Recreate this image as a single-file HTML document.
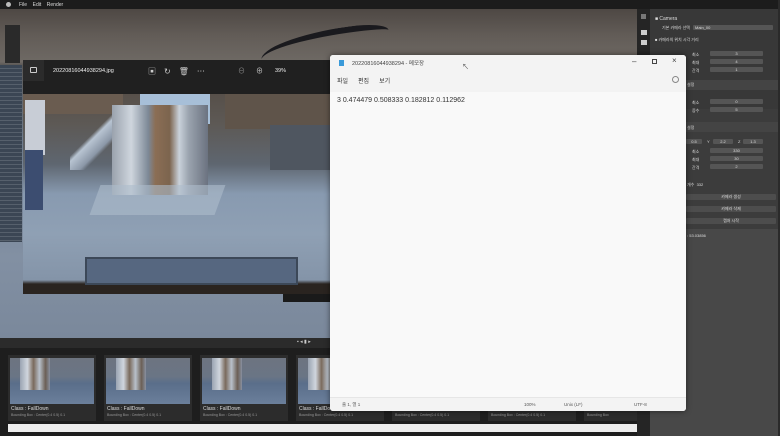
<!DOCTYPE html>
<html><head><meta charset="utf-8"><style>
*{margin:0;padding:0;box-sizing:border-box}
body{width:780px;height:436px;overflow:hidden;background:#202020;font-family:"Liberation Sans","Noto Sans CJK KR",sans-serif;position:relative}
.a{position:absolute}
.t{color:#ddd;font-size:5px;white-space:nowrap}
.card{position:absolute;top:355px;width:88px;height:66px;background:#2c2c2c}
.card .img{position:absolute;left:2px;top:3px;width:84px;height:46px;background:linear-gradient(180deg,#6d7480 0%,#6a7585 40%,#5a6e8a 55%,#6b7f9b 100%)}
.card .img:before{content:"";position:absolute;left:10px;top:0;width:30px;height:32px;background:linear-gradient(90deg,#9aa4b2,#d0d6de 25%,#7a6a5c 45%,#b8c0ca 65%,#6b5f55 85%,#8890a0)}
.card .c1{position:absolute;left:3px;top:51px;font-size:5px;color:#ddd}
.card .c2{position:absolute;left:3px;top:58px;font-size:3.5px;color:#999}
.field{position:absolute;height:5px;background:#555;border-radius:1px;color:#ddd;font-size:4px;text-align:center;line-height:5px}
.btn{position:absolute;height:6px;background:#4d4d4d;color:#ddd;font-size:4px;text-align:center;line-height:6px;border-radius:1px}
</style></head><body>
<div class="a" style="left:0;top:0;width:780px;height:9px;background:#1c1c1c"></div>
<div class="a t" style="left:19px;top:2px">File&nbsp;&nbsp;&nbsp;&nbsp;Edit&nbsp;&nbsp;&nbsp;&nbsp;Render</div>
<div class="a" style="left:6px;top:2px;width:5px;height:5px;border-radius:50%;background:#bbb"></div>
<!-- 3D scene -->
<div class="a" style="left:0;top:9px;width:640px;height:330px;background:linear-gradient(180deg,#4e4844 0%,#625c57 8%,#6e6964 16%,#5a5856 17%,#6e7c8e 40%,#8290a3 75%,#7a889b 100%)"></div>
<div class="a" style="left:260px;top:30px;width:130px;height:30px;border-top:6px solid #1a1a1e;border-radius:70% 30% 0 0;transform:rotate(-8deg)"></div>
<div class="a" style="left:5px;top:25px;width:15px;height:38px;background:#2a2a2a"></div>
<div class="a" style="left:0;top:65px;width:22px;height:177px;background:repeating-linear-gradient(180deg,#3b4654 0 3px,#56606c 3px 4px)"></div>
<div class="a" style="left:283px;top:290px;width:50px;height:12px;background:#1a1a1a"></div>
<!-- photo viewer -->
<div class="a" style="left:23px;top:60px;width:310px;height:34px;background:#202020"></div>
<div class="a" style="left:23px;top:60px;width:21px;height:21px;background:#2b2b2b"></div>
<div class="a" style="left:30px;top:67px;width:7px;height:6px;border:1px solid #ccc;border-radius:1px"></div>
<div class="a t" style="left:53px;top:68px;font-size:5.5px;color:#eee">20220816044938294.jpg</div>
<div class="a t" style="left:148px;top:66px;font-size:8px;color:#ccc;letter-spacing:8px">▣↻🗑⋯</div>
<div class="a t" style="left:238px;top:66px;font-size:7px;color:#888">⊖</div>
<div class="a t" style="left:256px;top:66px;font-size:7px;color:#ccc">⊕</div>
<div class="a t" style="left:275px;top:68px;font-size:5.5px;color:#eee">39%</div>
<div class="a" style="left:23px;top:94px;width:307px;height:200px;background:linear-gradient(180deg,#57504a 0%,#5d5955 15%,#5e6670 35%,#889ab0 50%,#8fa0b4 70%,#8494a8 93%,#2a2420 95%,#2a2420 100%)"></div>
<div class="a" style="left:23px;top:94px;width:100px;height:20px;background:#6a5c50"></div>
<div class="a" style="left:225px;top:94px;width:105px;height:35px;background:#5f544a"></div>
<div class="a" style="left:270px;top:125px;width:60px;height:45px;background:#4f5660"></div>
<div class="a" style="left:140px;top:94px;width:70px;height:30px;background:#a7bfd8"></div>
<div class="a" style="left:70px;top:110px;width:55px;height:60px;background:linear-gradient(135deg,transparent 40%,#b8c4d2 45%,#8c98a8 60%,transparent 65%)"></div>
<div class="a" style="left:112px;top:105px;width:96px;height:90px;background:linear-gradient(90deg,#9aa2ad,#cfd6de 20%,#7c8896 38%,#8b6e55 45%,#7c644e 60%,#c9d1da 70%,#9aa3ae 80%,#6b7280)"></div>
<div class="a" style="left:95px;top:185px;width:125px;height:30px;background:#aebccc;transform:skewX(-20deg);opacity:.6"></div>
<div class="a" style="left:25px;top:100px;width:20px;height:55px;background:#c8cdd6"></div>
<div class="a" style="left:25px;top:150px;width:18px;height:60px;background:#3c4d70"></div>
<div class="a" style="left:85px;top:257px;width:213px;height:28px;background:#566780;border:2px solid #3c4858"></div>
<div class="a" style="left:0;top:338px;width:640px;height:10px;background:#2b2b2b"></div>
<div class="a t" style="left:297px;top:339px;font-size:5px;color:#ccc">▪ ◂ ▮ ▸</div>
<div class="a" style="left:0;top:348px;width:640px;height:88px;background:#1e1e1e"></div>
<div class="card" style="left:8px"><div class="img"></div><div class="c1">Class : FallDown</div><div class="c2">Bounding Box : Center(0.4 0.5) 0.1</div></div>
<div class="card" style="left:104px"><div class="img"></div><div class="c1">Class : FallDown</div><div class="c2">Bounding Box : Center(0.4 0.5) 0.1</div></div>
<div class="card" style="left:200px"><div class="img"></div><div class="c1">Class : FallDown</div><div class="c2">Bounding Box : Center(0.4 0.5) 0.1</div></div>
<div class="card" style="left:296px"><div class="img"></div><div class="c1">Class : FallDown</div><div class="c2">Bounding Box : Center(0.4 0.5) 0.1</div></div>
<div class="card" style="left:392px"><div class="img"></div><div class="c2">Bounding Box : Center(0.4 0.5) 0.1</div></div>
<div class="card" style="left:488px"><div class="img"></div><div class="c2">Bounding Box : Center(0.4 0.5) 0.1</div></div>
<div class="card" style="left:584px;width:56px"><div class="img" style="width:52px"></div><div class="c2">Bounding Box</div></div>
<div class="a" style="left:8px;top:424px;width:629px;height:8px;background:#eee"></div>
<!-- right side -->
<div class="a" style="left:637px;top:9px;width:13px;height:427px;background:#252525"></div>
<div class="a" style="left:650px;top:9px;width:128px;height:427px;background:#484848"></div>
<div class="a" style="left:650px;top:9px;width:128px;height:100px;background:#383838"></div>
<div class="a" style="left:650px;top:109px;width:128px;height:120px;background:#3c3c3c"></div>
<div class="a" style="left:778px;top:0;width:2px;height:436px;background:#2a2a2a"></div>
<div class="a" style="left:641px;top:14px;width:5px;height:5px;background:#777"></div>
<div class="a" style="left:641px;top:30px;width:6px;height:5px;background:#ccc"></div>
<div class="a" style="left:641px;top:40px;width:6px;height:5px;background:#ccc"></div>
<div class="a t" style="left:655px;top:16px">■ Camera</div>
<div class="a t" style="left:662px;top:25px;font-size:4px">기본 카메라 선택</div>
<div class="a field" style="left:693px;top:25px;width:80px;text-align:left;padding-left:2px">Main_00</div>
<div class="a t" style="left:655px;top:37px;font-size:4px">■ 카메라의 위치 시각 거리</div>
<div class="a t" style="left:692px;top:52px;font-size:4px">최소</div><div class="field" style="left:710px;top:51px;width:53px">3</div>
<div class="a t" style="left:692px;top:60px;font-size:4px">최대</div><div class="field" style="left:710px;top:59px;width:53px">4</div>
<div class="a t" style="left:692px;top:68px;font-size:4px">간격</div><div class="field" style="left:710px;top:67px;width:53px">1</div>
<div class="a" style="left:686px;top:80px;width:92px;height:10px;background:#444"></div>
<div class="a t" style="left:687px;top:82px;font-size:4px">설정</div>
<div class="a t" style="left:692px;top:100px;font-size:4px">최소</div><div class="field" style="left:710px;top:99px;width:53px">0</div>
<div class="a t" style="left:692px;top:108px;font-size:4px">증수</div><div class="field" style="left:710px;top:107px;width:53px">5</div>
<div class="a" style="left:686px;top:122px;width:92px;height:10px;background:#444"></div>
<div class="a t" style="left:687px;top:125px;font-size:4px">설정</div>
<div class="field" style="left:686px;top:139px;width:16px">0.5</div><div class="a t" style="left:707px;top:139px;font-size:4px">Y</div>
<div class="field" style="left:713px;top:139px;width:20px">2.2</div><div class="a t" style="left:738px;top:139px;font-size:4px">Z</div>
<div class="field" style="left:743px;top:139px;width:20px">1.3</div>
<div class="a t" style="left:692px;top:149px;font-size:4px">최소</div><div class="field" style="left:710px;top:148px;width:53px">330</div>
<div class="a t" style="left:692px;top:157px;font-size:4px">최대</div><div class="field" style="left:710px;top:156px;width:53px">30</div>
<div class="a t" style="left:692px;top:165px;font-size:4px">간격</div><div class="field" style="left:710px;top:164px;width:53px">2</div>
<div class="a t" style="left:687px;top:182px;font-size:4px">개수&nbsp;&nbsp;332</div>
<div class="btn" style="left:686px;top:194px;width:90px">카메라 생성</div>
<div class="btn" style="left:686px;top:206px;width:90px">카메라 삭제</div>
<div class="btn" style="left:686px;top:218px;width:90px">캡처 시작</div>
<div class="a t" style="left:687px;top:233px;font-size:4px">: 53.03856</div>
<!-- notepad -->
<div class="a" style="left:330px;top:55px;width:356px;height:356px;background:#f9f9f9;box-shadow:0 0 6px rgba(0,0,0,.5);border-radius:3px"></div>
<div class="a" style="left:330px;top:55px;width:356px;height:37px;background:#f3f3f3;border-radius:3px 3px 0 0"></div>
<div class="a" style="left:339px;top:60px;width:5px;height:6px;background:#3a9ad9"></div>
<div class="a" style="left:352px;top:59px;font-size:5.5px;color:#444;white-space:nowrap">20220816044938294 - 메모장</div>
<div class="a" style="left:462px;top:62px;font-size:7px;color:#555">↖</div>
<div class="a" style="left:632px;top:57px;font-size:8px;color:#444">–</div>
<div class="a" style="left:652px;top:59px;width:5px;height:5px;border:1px solid #444"></div>
<div class="a" style="left:672px;top:56px;font-size:8px;color:#444">×</div>
<div class="a" style="left:337px;top:76px;font-size:6px;color:#333;white-space:nowrap">파일&nbsp;&nbsp;&nbsp;&nbsp;&nbsp;&nbsp;편집&nbsp;&nbsp;&nbsp;&nbsp;&nbsp;&nbsp;보기</div>
<div class="a" style="left:672px;top:76px;width:7px;height:7px;border:1px solid #888;border-radius:50%"></div>
<div class="a" style="left:337px;top:97px;font-size:7px;color:#333;white-space:nowrap">3 0.474479 0.508333 0.182812 0.112962</div>
<div class="a" style="left:330px;top:397px;width:356px;height:14px;background:#f3f3f3;border-top:1px solid #e6e6e6;border-radius:0 0 3px 3px"></div>
<div class="a" style="left:342px;top:402px;font-size:4.5px;color:#555">줄 1, 열 1</div>
<div class="a" style="left:524px;top:402px;font-size:4.5px;color:#555">100%</div>
<div class="a" style="left:564px;top:402px;font-size:4.5px;color:#555">Unix (LF)</div>
<div class="a" style="left:634px;top:402px;font-size:4.5px;color:#555">UTF-8</div>
</body></html>
